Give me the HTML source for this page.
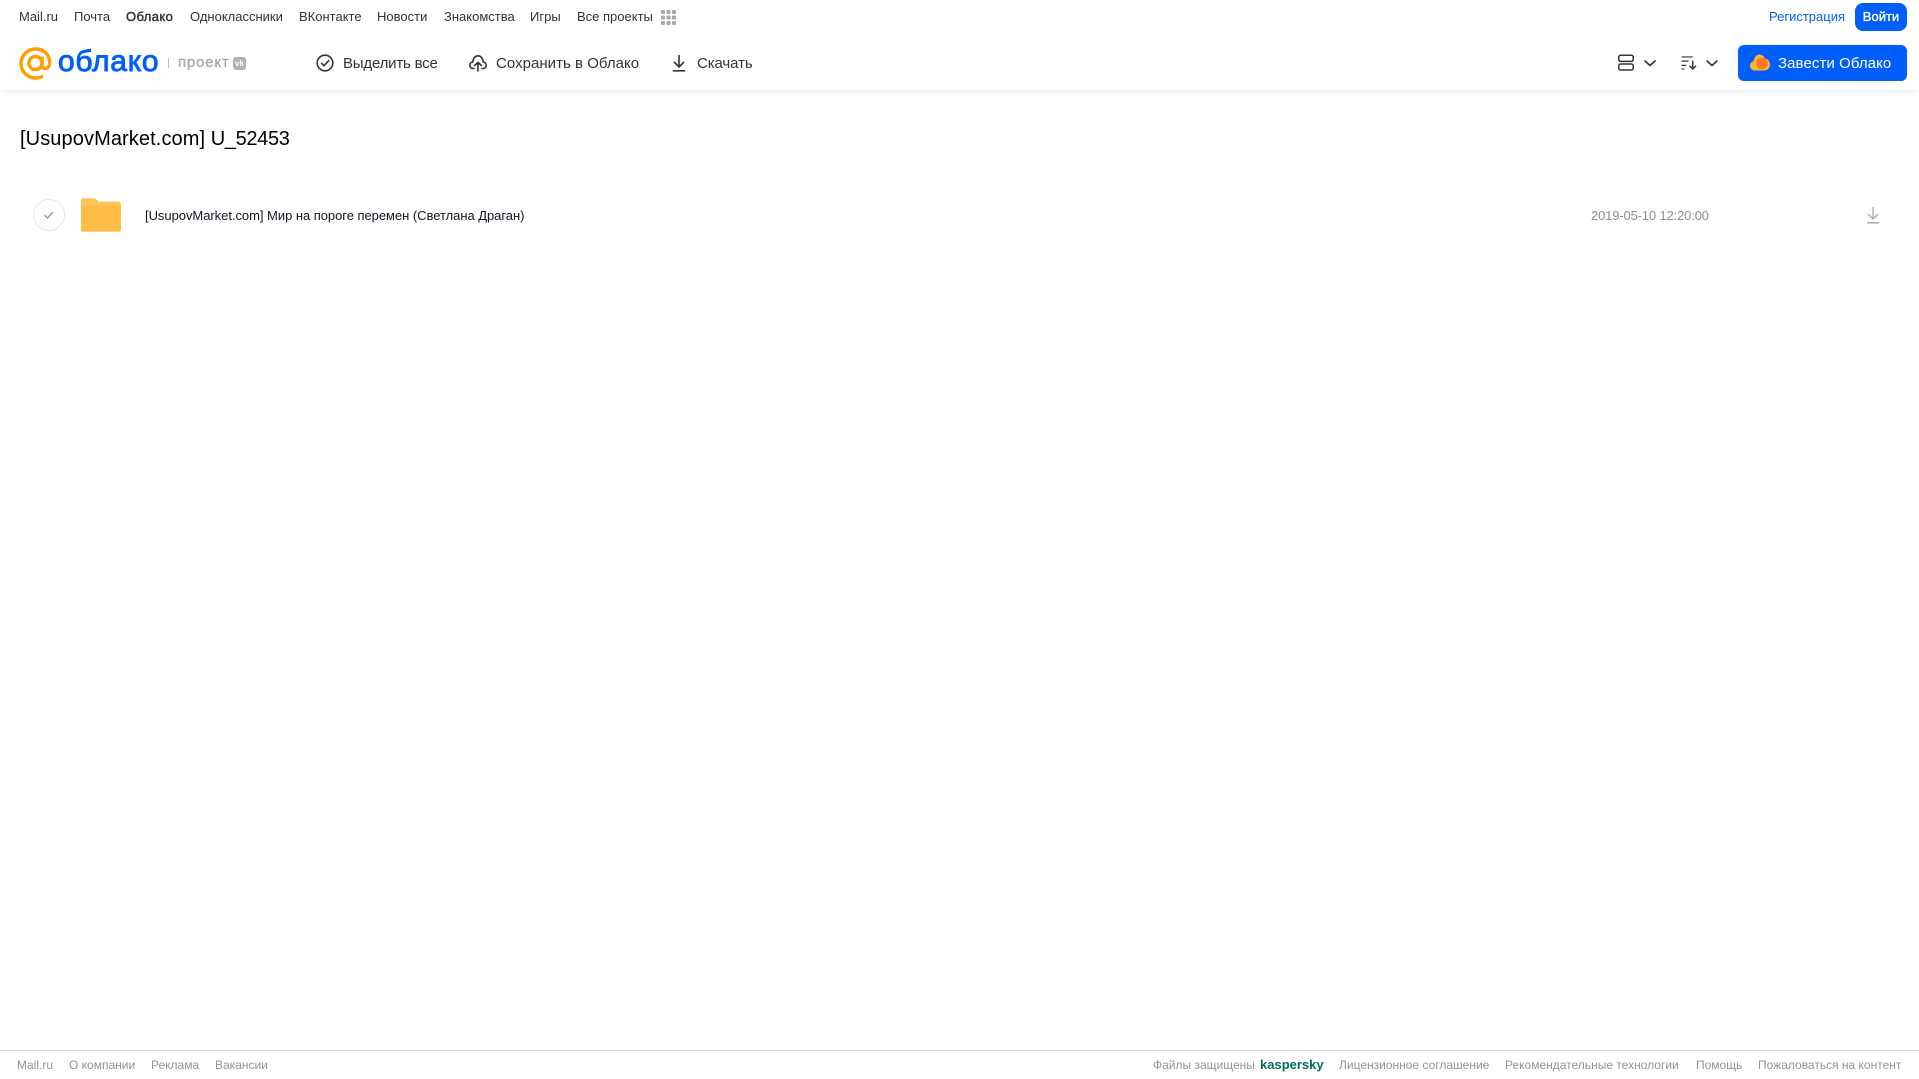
<!DOCTYPE html>
<html lang="ru"><head><meta charset="utf-8"><title>Облако</title>
<style>
html,body{margin:0;padding:0;background:#fff}
body{width:1919px;height:1079px;position:relative;overflow:hidden;font-family:"Liberation Sans",Arial,sans-serif}
.t{position:absolute;white-space:nowrap}
.n{top:9px;font-size:13px;line-height:16px;color:#333}
.b{top:54px;font-size:15px;line-height:20px;color:#333}
.f{top:1057px;font-size:12px;line-height:16px;color:#919399}
svg{position:absolute;overflow:visible}
</style></head><body>
<div style="position:absolute;left:0;top:0;width:1919px;height:90px;background:#fff;box-shadow:0 2px 8px rgba(0,0,0,.07)"></div>

<span class="t n" style="left:19px">Mail.ru</span>
<span class="t n" style="left:74px">Почта</span>
<span class="t n" style="left:126px;-webkit-text-stroke:.45px #333;letter-spacing:.4px">Облако</span>
<span class="t n" style="left:190px">Одноклассники</span>
<span class="t n" style="left:299px">ВКонтакте</span>
<span class="t n" style="left:377px">Новости</span>
<span class="t n" style="left:444px">Знакомства</span>
<span class="t n" style="left:530px">Игры</span>
<span class="t n" style="left:577px">Все проекты</span>
<svg style="left:661px;top:10px" width="15" height="15" fill="#aaa"><rect x="0" y="0" width="4" height="4" rx="1"/><rect x="5.500" y="0" width="4" height="4" rx="1"/><rect x="11" y="0" width="4" height="4" rx="1"/><rect x="0" y="5.500" width="4" height="4" rx="1"/><rect x="5.500" y="5.500" width="4" height="4" rx="1"/><rect x="11" y="5.500" width="4" height="4" rx="1"/><rect x="0" y="11" width="4" height="4" rx="1"/><rect x="5.500" y="11" width="4" height="4" rx="1"/><rect x="11" y="11" width="4" height="4" rx="1"/></svg>

<span class="t n" style="left:1769px;color:#005ff9">Регистрация</span>
<div class="t" style="left:1855px;top:3px;width:52px;height:28px;border-radius:8px;background:#005ff9;color:#fff;font-size:13px;-webkit-text-stroke:.35px #fff;line-height:28px;text-align:center">Войти</div>

<!-- logo -->
<svg style="left:19px;top:47px" width="33" height="33" viewBox="0 0 33 33" fill="none" stroke="#ff9e00" stroke-width="3.400"><circle cx="16.500" cy="16" r="6.600"/><path d="M23 9.500v8.500c0 5 7.600 5 7.600-2.500C30.600 7.500 24.500 2 16.500 2 8.500 2 2 8.500 2 16.500S8.500 31 16.500 31c3 0 5.500-.7 7.500-2"/></svg>
<span class="t" style="left:58px;top:44px;font-size:30px;line-height:36px;color:#005ff9;-webkit-text-stroke:.9px #005ff9;letter-spacing:.75px">облако</span>
<div style="position:absolute;left:168px;top:58px;width:1px;height:10px;background:#bbb"></div>
<span class="t" style="left:178px;top:54px;font-size:15px;line-height:18px;color:#a5a7ab;-webkit-text-stroke:.3px #a5a7ab;letter-spacing:.8px">проект</span>
<div class="t" style="left:233px;top:57px;width:13px;height:13px;border-radius:3px;background:#aeb0b4;color:#fff;font-size:8px;font-weight:bold;line-height:13px;text-align:center">vk</div>

<!-- toolbar -->
<svg style="left:316px;top:54px" width="18" height="18" viewBox="0 0 18 18" fill="none" stroke="#333" stroke-width="1.600"><circle cx="9" cy="9" r="7.800"/><path d="M5.500 9.200l2.500 2.500 4.700-5" stroke-linecap="round" stroke-linejoin="round"/></svg>
<span class="t b" style="left:343px;letter-spacing:-.2px">Выделить все</span>
<svg style="left:469px;top:54px" width="18" height="18" viewBox="0 0 18 18" fill="none" stroke="#333" stroke-width="1.600" stroke-linecap="round" stroke-linejoin="round"><path d="M5 14.500H4C2 14.500 .8 13 .8 11.300c0-1.700 1.200-3 2.900-3.200C4 4.500 6.300 1.800 9 1.800s5 2.700 5.300 6.300c1.700.2 2.900 1.500 2.900 3.200 0 1.700-1.200 3.200-3.200 3.200h-1"/><path d="M9 17V8.500M5.800 11.500L9 8.300l3.200 3.200"/></svg>
<span class="t b" style="left:496px;letter-spacing:.03px">Сохранить в Облако</span>
<svg style="left:671px;top:54px" width="16" height="18" viewBox="0 0 16 18" fill="none" stroke="#333" stroke-width="1.600"><path d="M8 1v11.500M3 8l5 5 5-5"/><path d="M1.800 16.800h12.400"/></svg>
<span class="t b" style="left:697px;letter-spacing:-.1px">Скачать</span>

<!-- right controls -->
<svg style="left:1618px;top:54px" width="16" height="18" viewBox="0 0 17 18" fill="none" stroke="#333" stroke-width="1.600"><rect x=".8" y=".8" width="15.400" height="6.500" rx="2"/><rect x=".8" y="10" width="15.400" height="6.500" rx="2"/></svg>
<svg style="left:1644px;top:60px" width="12" height="7" viewBox="0 0 12 7" fill="none" stroke="#333" stroke-width="1.700" stroke-linecap="round" stroke-linejoin="round"><path d="M1 1l5 4.500L11 1"/></svg>
<svg style="left:1681px;top:56px" width="16" height="14" viewBox="0 0 16 15" fill="none" stroke="#333" stroke-width="1.300"><path d="M0 1h12M0 5.500h7.500M0 10h5M0 14h3"/><path d="M12 5v9M8.500 10.500l3.500 3.500 3.500-3.500" stroke-width="1.500"/></svg>
<svg style="left:1706px;top:60px" width="12" height="7" viewBox="0 0 12 7" fill="none" stroke="#333" stroke-width="1.700" stroke-linecap="round" stroke-linejoin="round"><path d="M1 1l5 4.500L11 1"/></svg>

<div style="position:absolute;left:1738px;top:45px;width:169px;height:36px;border-radius:6px;background:#005ff9"></div>
<svg style="left:1750px;top:54px" width="20" height="17" viewBox="0 0 20 17"><path d="M5 16.500C2 16.500 0 14.500 0 11.800 0 9.500 1.500 7.800 3.500 7.300 4 3.500 6.500 .5 9.500 .5c2.500 0 4.500 1.700 5.200 4 3 .2 5.300 2.700 5.300 6 0 3.400-2.500 6-6 6z" fill="#ffb13d"/><circle cx="12" cy="9.500" r="5.800" fill="#ff7a1a"/></svg>
<span class="t" style="left:1778px;top:54px;font-size:15px;line-height:20px;color:#fff;letter-spacing:.08px">Завести Облако</span>

<!-- title -->
<span class="t" style="left:20px;top:124.500px;font-size:20px;line-height:28px;color:#000"><span style="letter-spacing:.1px">[UsupovMarket.com]</span> <span style="letter-spacing:-.35px">U_52453</span></span>

<!-- row -->
<div style="position:absolute;left:33px;top:199px;width:30px;height:30px;border:1px solid #e8e8e8;border-radius:50%"></div>
<svg style="left:43px;top:210px" width="12" height="10" viewBox="0 0 12 10" fill="none" stroke="#999" stroke-width="1.300"><path d="M1.500 5l3 3L10 2"/></svg>
<svg style="left:81px;top:197px" width="40" height="35" viewBox="0 0 42 36"><path d="M2 1h11c2 0 3 .8 4 2l1.500 1.500 H39c1.700 0 3 1.300 3 3V34c0 1.100-.9 2-2 2H2c-1.100 0-2-.9-2-2V3c0-1.100.9-2 2-2z" fill="#ffc655"/><path d="M0 8.500h42v25.500c0 1.100-.9 2-2 2H2c-1.100 0-2-.9-2-2z" fill="#ffbe48"/></svg>
<span class="t" style="left:145px;top:208px;font-size:13px;line-height:16px;color:#1a1020;letter-spacing:-.04px">[UsupovMarket.com] Мир на пороге перемен (Светлана Драган)</span>
<span class="t" style="left:1591px;top:208px;font-size:13px;line-height:16px;color:#8e8e8e;letter-spacing:-.15px">2019-05-10 12:20:00</span>
<svg style="left:1866px;top:206px" width="14" height="18" viewBox="0 0 14 18" fill="none" stroke="#a8a8a8" stroke-width="1.300"><path d="M7 1v11.500M2 8l5 5 5-5"/><path d="M1 16.800h12" stroke-width="1.500"/></svg>

<!-- footer -->
<div style="position:absolute;left:0;top:1050px;width:1919px;height:1px;background:#dcdcdc"></div>
<span class="t f" style="left:17px">Mail.ru</span>
<span class="t f" style="left:69px">О компании</span>
<span class="t f" style="left:151px">Реклама</span>
<span class="t f" style="left:215px">Вакансии</span>
<span class="t f" style="left:1153px">Файлы защищены</span>
<span class="t f" style="left:1260px;color:#006d5c;font-weight:bold;font-size:13px">kaspersky</span>
<span class="t f" style="left:1339px">Лицензионное соглашение</span>
<span class="t f" style="left:1505px">Рекомендательные технологии</span>
<span class="t f" style="left:1696px">Помощь</span>
<span class="t f" style="left:1758px">Пожаловаться на контент</span>
</body></html>
